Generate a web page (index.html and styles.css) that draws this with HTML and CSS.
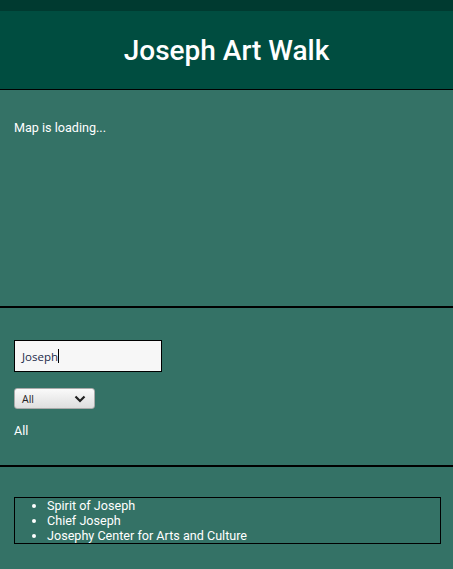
FILE: index.html
```html
<!DOCTYPE html>
<html>
<head>
<meta charset="utf-8">
<link rel="stylesheet" href="styles.css">
</head>
<body>
<div class="topbar"></div>
<header class="header"><h1 class="title">Joseph Art Walk</h1></header>
<section class="map"><p class="map-msg">Map is loading...</p></section>
<section class="controls">
  <div class="search"><span class="search-text">Joseph</span><span class="caret"></span></div>
  <div class="select"><span>All</span><svg width="12" height="8" viewBox="0 0 12 8"><path d="M1.5 1.5 L6 6 L10.5 1.5" fill="none" stroke="#222" stroke-width="2.2"/></svg></div>
  <p class="filter">All</p>
</section>
<section class="results">
  <ul class="list">
    <li>Spirit of Joseph</li>
    <li>Chief Joseph</li>
    <li>Josephy Center for Arts and Culture</li>
  </ul>
</section>
</body>
</html>
```
FILE: styles.css
```css
html, body { margin: 0; padding: 0; }
body { background: #347266; font-family: Roboto, "Liberation Sans", sans-serif; color: #fff; height: 569px; overflow: hidden; }
.topbar { height: 11px; background: #003a30; }
.header { height: 78px; background: #004d40; border-bottom: 1px solid #000; display: flex; align-items: center; justify-content: center; }
.title { margin: 0; font-size: 28px; font-weight: 500; color: #fff; }
.map { height: 216px; border-bottom: 2px solid #000; padding: 0 14px; }
.map-msg { margin: 0; padding-top: 30px; font-size: 12.6px; line-height: 16px; }
.controls { height: 125px; border-bottom: 2px solid #000; padding: 32px 14px 0; }
.search { width: 148px; height: 32px; box-sizing: border-box; border: 1px solid #000; background: #f7f7f7; font-family: "Open Sans", sans-serif; font-size: 11.5px; color: #1c2b4a; padding: 0 0 0 7px; display: flex; align-items: center; }
.caret { display: inline-block; width: 1px; height: 14px; background: #000; }
.select { margin-top: 16px; width: 81px; height: 21px; box-sizing: border-box; border: 1px solid #aaa; border-radius: 3px; background: linear-gradient(#fafafa, #dedede); display: flex; align-items: center; justify-content: space-between; padding: 0 8px 0 7px; color: #222; font-family: "Open Sans", sans-serif; font-size: 10.5px; }
.filter { margin: 14px 0 0; font-size: 12.6px; line-height: 16px; }
.results { padding: 30px 12px 0 14px; }
.list { margin: 0; border: 1px solid #000; padding: 0 0 0 32px; font-size: 12.6px; line-height: 15px; }
```
